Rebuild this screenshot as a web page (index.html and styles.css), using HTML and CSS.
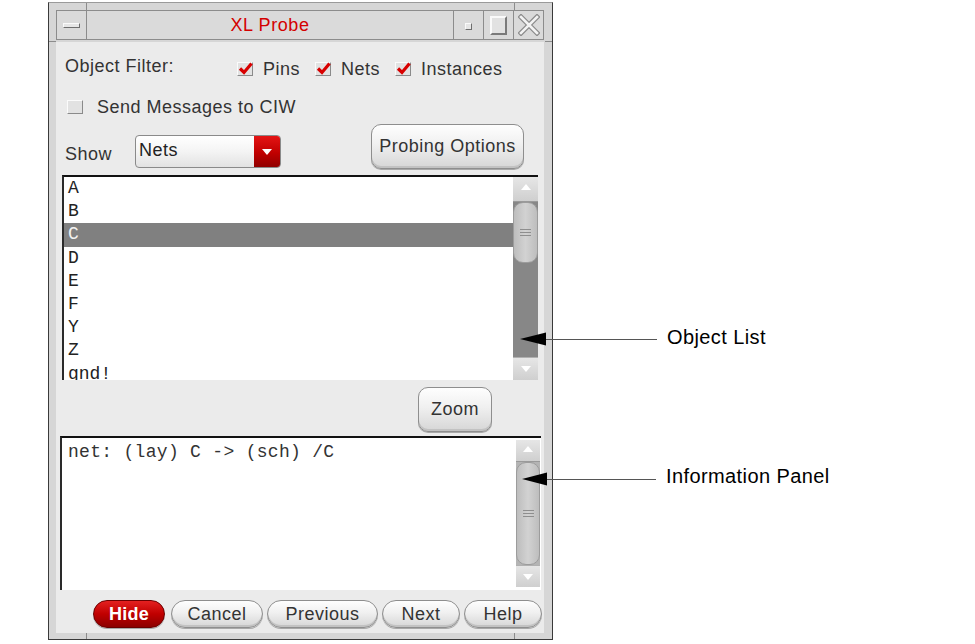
FILE: index.html
```html
<!DOCTYPE html>
<html>
<head>
<meta charset="utf-8">
<title>XL Probe</title>
<link rel="stylesheet" href="styles.css">
</head>
<body>
<div class="stage">
  <div class="window">
    <div class="titlebar">
      <div class="tb-btn tb-menu"><span class="menu-bar"></span></div>
      <div class="tb-title">XL Probe</div>
      <div class="tb-btn tb-side"><span class="min-sq"></span></div>
      <div class="tb-btn tb-side"><span class="max-sq"></span></div>
      <div class="tb-btn tb-side">
        <svg class="close-x" width="22" height="22" viewBox="0 0 22 22">
          <path d="M3 3 L19 19 M19 3 L3 19" stroke="#8a8a8a" stroke-width="5" stroke-linecap="square" fill="none"/>
          <path d="M3 3 L19 19 M19 3 L3 19" stroke="#f2f2f2" stroke-width="2.6" stroke-linecap="square" fill="none"/>
        </svg>
      </div>
    </div>

    <div class="content">
      <div class="row r1">
        <span class="filter-lbl">Object Filter:</span>
        <div class="filters">
          <label class="cb"><span class="box"><svg class="tick" width="16" height="14" viewBox="0 0 16 14"><path d="M3 6.5 L7 10.5 L14.5 1.5" stroke="#d80000" stroke-width="3.2" fill="none"/></svg></span>Pins</label>
          <label class="cb"><span class="box"><svg class="tick" width="16" height="14" viewBox="0 0 16 14"><path d="M3 6.5 L7 10.5 L14.5 1.5" stroke="#d80000" stroke-width="3.2" fill="none"/></svg></span>Nets</label>
          <label class="cb"><span class="box"><svg class="tick" width="16" height="14" viewBox="0 0 16 14"><path d="M3 6.5 L7 10.5 L14.5 1.5" stroke="#d80000" stroke-width="3.2" fill="none"/></svg></span>Instances</label>
        </div>
      </div>

      <div class="row r2">
        <label class="cb send"><span class="box"></span>Send Messages to CIW</label>
      </div>

      <div class="row r3">
        <span class="show-lbl">Show</span>
        <div class="combo">
          <span class="combo-val">Nets</span>
          <span class="combo-arrow"><svg width="10" height="6" viewBox="0 0 10 6"><path d="M0 0 L10 0 L5 6 Z" fill="#fff"/></svg></span>
        </div>
        <button class="btn probing">Probing Options</button>
      </div>

      <div class="list">
        <div class="items">
          <div class="item">A</div>
          <div class="item">B</div>
          <div class="item sel">C</div>
          <div class="item">D</div>
          <div class="item">E</div>
          <div class="item">F</div>
          <div class="item">Y</div>
          <div class="item">Z</div>
          <div class="item">gnd!</div>
        </div>
        <div class="vscroll">
          <div class="sb-btn"><svg width="10" height="6" viewBox="0 0 10 6"><path d="M0 6 L10 6 L5 0 Z" fill="#fff"/></svg></div>
          <div class="sb-track">
            <div class="sb-thumb short"><span class="grip"></span></div>
          </div>
          <div class="sb-btn down"><svg width="10" height="6" viewBox="0 0 10 6"><path d="M0 0 L10 0 L5 6 Z" fill="#fff"/></svg></div>
        </div>
      </div>

      <div class="row zoom-row">
        <button class="btn zoom">Zoom</button>
      </div>

      <div class="info">
        <div class="info-text">net: (lay) C -&gt; (sch) /C</div>
        <div class="vscroll info-scroll">
          <div class="sb-btn"><svg width="10" height="6" viewBox="0 0 10 6"><path d="M0 6 L10 6 L5 0 Z" fill="#fff"/></svg></div>
          <div class="sb-track light">
            <div class="sb-thumb full"><span class="grip"></span></div>
          </div>
          <div class="sb-btn down"><svg width="10" height="6" viewBox="0 0 10 6"><path d="M0 0 L10 0 L5 6 Z" fill="#fff"/></svg></div>
        </div>
      </div>

      <div class="row btn-row">
        <button class="btn pill hide">Hide</button>
        <button class="btn pill cancel">Cancel</button>
        <button class="btn pill previous">Previous</button>
        <button class="btn pill next">Next</button>
        <button class="btn pill help">Help</button>
      </div>
    </div>

    <span class="mark mv m-tl"></span>
    <span class="mark mv m-tr"></span>
    <span class="mark mv m-bl"></span>
    <span class="mark mv m-br"></span>
    <span class="mark mh m-l"></span>
    <span class="mark mh m-r"></span>
  </div>

  <svg class="annot" width="975" height="644" viewBox="0 0 975 644">
    <line x1="545" y1="339.5" x2="657" y2="339.5" stroke="#555" stroke-width="1"/>
    <polygon points="520,339 546,332.5 546,345.5" fill="#000"/>
    <line x1="546" y1="479.5" x2="656" y2="479.5" stroke="#555" stroke-width="1"/>
    <polygon points="522,479 547,472.5 547,485.5" fill="#000"/>
  </svg>
  <div class="note note-obj">Object List</div>
  <div class="note note-info">Information Panel</div>
</div>
</body>
</html>
```

FILE: styles.css
```css
* { box-sizing: border-box; }

html, body {
  margin: 0;
  padding: 0;
  background: #ffffff;
}

body {
  font-family: "Liberation Sans", Arial, sans-serif;
  font-size: 18px;
  color: #333;
  letter-spacing: 0.5px;
}

.stage {
  position: relative;
  width: 975px;
  height: 644px;
  overflow: hidden;
}

/* ---------- window frame ---------- */
.window {
  position: relative;
  margin: 2px 0 0 48px;
  width: 505px;
  height: 638px;
  border: 1px solid #3a3a3a;
  border-top-color: #9a9a9a;
  background: #d6d6d6;
  padding: 7px 8px 6px 7px;
  display: flex;
  flex-direction: column;
}

.mark { position: absolute; background: #8c8c8c; }
.mv { width: 1px; }
.mh { height: 1px; }
.m-tl { left: 37px; top: 0; height: 7px; }
.m-tr { left: 465px; top: 0; height: 7px; }
.m-bl { left: 37px; top: 630px; height: 6px; }
.m-br { left: 465px; top: 630px; height: 6px; }
.m-l { left: 0; top: 38px; width: 7px; }
.m-r { left: 496px; top: 38px; width: 7px; }

.titlebar {
  height: 30px;
  margin-bottom: 2px;
  border: 1px solid #8c8c8c;
  background: #dadada;
  display: flex;
}

.tb-btn {
  display: flex;
  align-items: center;
  justify-content: center;
}
.tb-menu {
  width: 30px;
  border-right: 1px solid #8c8c8c;
}
.tb-side {
  width: 30px;
  border-left: 1px solid #8c8c8c;
}

.menu-bar {
  width: 17px;
  height: 5px;
  background: #e6e6e6;
  border: 1px solid;
  border-color: #fafafa #6e6e6e #6e6e6e #fafafa;
  margin-top: 1px;
}
.min-sq {
  width: 7px;
  height: 7px;
  background: #e6e6e6;
  border: 1px solid;
  border-color: #fafafa #6e6e6e #6e6e6e #fafafa;
  margin-top: 2px;
}
.max-sq {
  width: 17px;
  height: 19px;
  background: #e2e2e2;
  border: 2px solid;
  border-color: #fafafa #7a7a7a #7a7a7a #fafafa;
}

.tb-title {
  flex: 1;
  text-align: center;
  line-height: 28px;
  color: #d40000;
  letter-spacing: 0.6px;
}

/* ---------- content ---------- */
.content {
  flex: 1;
  background: #ebebeb;
  display: flex;
  flex-direction: column;
}

.row { display: flex; }

.r1 {
  height: 46px;
  padding: 14px 0 0 9px;
  align-items: flex-start;
  line-height: 20px;
}
.filter-lbl { width: 172px; }
.filters {
  display: flex;
  margin-top: 3px;
}
.cb {
  display: flex;
  align-items: center;
  gap: 10px;
  margin-right: 15px;
  line-height: 20px;
}
.box {
  position: relative;
  width: 16px;
  height: 14px;
  background: #e2e2e2;
  border: 1px solid;
  border-color: #fbfbfb #8a8a8a #8a8a8a #fbfbfb;
  flex: none;
}
.tick {
  position: absolute;
  left: -1px;
  top: -1px;
  overflow: visible;
}

.r2 {
  height: 34px;
  padding: 9px 0 0 11px;
  align-items: flex-start;
}
.send { gap: 14px; }

.r3 {
  height: 50px;
  padding: 0 20px 0 9px;
  align-items: flex-start;
}
.show-lbl {
  width: 70px;
  margin-top: 22px;
  line-height: 20px;
}
.combo {
  margin-top: 13px;
  width: 146px;
  height: 33px;
  display: flex;
  border: 1px solid #8a8a8a;
  border-radius: 4px;
  background: linear-gradient(#ffffff, #f4f4f4 50%, #e2e2e2);
  overflow: hidden;
}
.combo-val {
  flex: 1;
  padding-left: 3px;
  line-height: 28px;
  color: #222;
}
.combo-arrow {
  width: 26px;
  background: linear-gradient(#e41414, #c00000 55%, #900000);
  display: flex;
  align-items: center;
  justify-content: center;
}

.btn {
  font: inherit;
  letter-spacing: 0.5px;
  color: #333;
  padding: 0;
  background: linear-gradient(#fefefe, #f0f0f0 45%, #d6d6d6);
  border: 1px solid #8e8e8e;
  border-radius: 10px;
  box-shadow: inset 0 -2px 0 #c2c2c2, 0 1px 0 #a8a8a8;
}
.probing {
  margin-left: auto;
  margin-top: 2px;
  width: 153px;
  height: 45px;
}

/* ---------- list ---------- */
.list {
  margin: 3px 6px 0 6px;
  height: 205px;
  display: flex;
  background: #fff;
  border-top: 2px solid #111;
  border-left: 2px solid #2a2a2a;
}
.items {
  flex: 1;
  overflow: hidden;
  font-family: "Liberation Mono", "Courier New", monospace;
  font-size: 18px;
  letter-spacing: 0;
  color: #222;
}
.item {
  height: 23.2px;
  line-height: 23.2px;
  padding-left: 4px;
}
.item.sel {
  background: #808080;
  color: #f2f2f2;
}

.vscroll {
  width: 25px;
  display: flex;
  flex-direction: column;
}
.sb-btn {
  height: 25px;
  flex: none;
  background: linear-gradient(#e6e6e6, #cfcfcf);
  border-bottom: 1px solid #9a9a9a;
  display: flex;
  justify-content: center;
  padding-top: 7px;
}
.sb-btn.down {
  height: 23px;
  border-bottom: none;
  border-top: 1px solid #b0b0b0;
  align-items: center;
  padding-top: 0;
}
.sb-track {
  flex: 1;
  background: #878787;
  display: flex;
  flex-direction: column;
}
.sb-track.light { background: #b4b4b4; }
.sb-thumb {
  background: linear-gradient(90deg, #bdbdbd, #d2d2d2 50%, #bdbdbd);
  border: 1px solid #9c9c9c;
  border-radius: 10px;
  display: flex;
  align-items: center;
  justify-content: center;
}
.sb-thumb.short { height: 61px; }
.sb-thumb.full { flex: 1; }
.grip {
  width: 11px;
  height: 7px;
  border-top: 1px solid #8e8e8e;
  border-bottom: 1px solid #8e8e8e;
  background: linear-gradient(transparent 2px, #8e8e8e 2px, #8e8e8e 3px, transparent 3px);
}

/* ---------- zoom row ---------- */
.zoom-row {
  height: 56px;
  padding: 7px 52px 0 0;
  justify-content: flex-end;
  align-items: flex-start;
}
.zoom {
  width: 74px;
  height: 45px;
}

/* ---------- info panel ---------- */
.info {
  height: 154px;
  margin: 0 3px 0 4px;
  display: flex;
  background: #fff;
  border-top: 2px solid #111;
  border-left: 2px solid #2a2a2a;
}
.info-text {
  flex: 1;
  padding: 3px 0 0 6px;
  font-family: "Liberation Mono", "Courier New", monospace;
  font-size: 18px;
  letter-spacing: 0.3px;
  line-height: 23px;
  color: #333;
  white-space: pre;
}
.info-scroll {
  width: 24px;
  margin: 2px 1px 3px 0;
}
.info-scroll .sb-btn { height: 22px; padding-top: 6px; }
.info-scroll .sb-btn.down { height: 22px; padding-top: 0; }

/* ---------- bottom buttons ---------- */
.btn-row {
  height: 43px;
  padding: 10px 0 0 37px;
  align-items: flex-start;
  gap: 4px;
}
.pill {
  height: 28px;
  border-radius: 14px;
}
.hide {
  width: 72px;
  margin-right: 2px;
  color: #fff;
  font-weight: bold;
  letter-spacing: 0.3px;
  background: linear-gradient(#e42020, #c00000 50%, #8c0000);
  border-color: #6a0000;
  box-shadow: 0 1px 0 #a8a8a8;
}
.cancel { width: 92px; }
.previous { width: 111px; }
.next { width: 78px; }
.help { width: 78px; }

/* ---------- annotations ---------- */
.annot {
  position: absolute;
  left: 0;
  top: 0;
  pointer-events: none;
}
.note {
  position: absolute;
  font-size: 20px;
  line-height: 24px;
  color: #000;
  letter-spacing: 0.4px;
  white-space: nowrap;
}
.note-obj { left: 667px; top: 325px; }
.note-info { left: 666px; top: 464px; }
```
